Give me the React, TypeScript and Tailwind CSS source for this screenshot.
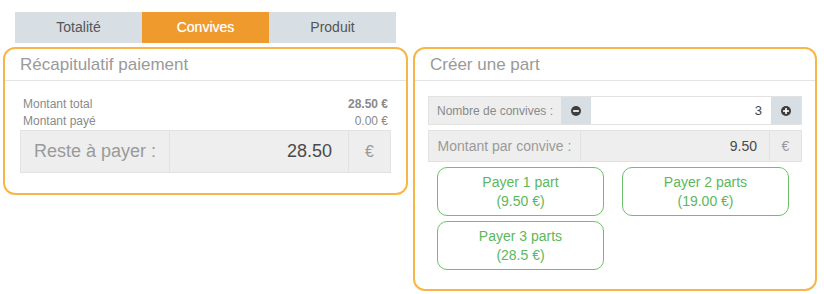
import React from 'react';

function CircleIcon({ plus }: { plus?: boolean }) {
  return (
    <svg width="10" height="10" viewBox="0 0 12 12">
      <circle cx="6" cy="6" r="6" fill="#3d3d3d" />
      <rect x="2.5" y="5" width="7" height="2" fill="#fff" />
      {plus && <rect x="5" y="2.5" width="2" height="7" fill="#fff" />}
    </svg>
  );
}

function PayButton({ label, amount }: { label: string; amount: string }) {
  return (
    <button className="w-[167px] h-[49px] rounded-[10px] border border-[#6cc26c] bg-white text-[#5cb85c] text-[14px] leading-[19px] flex flex-col items-center justify-center">
      <span>{label}</span>
      <span>{amount}</span>
    </button>
  );
}

export default function App() {
  const tabs = ['Totalité', 'Convives', 'Produit'];

  return (
    <div className="w-[824px] h-[294px] bg-white flex gap-[5px] pl-[3px] pt-[12px]" style={{ fontFamily: '"Liberation Sans", Arial, sans-serif' }}>
      {/* Left column */}
      <div className="w-[405px] flex flex-col">
        <div className="mx-[12px] h-[31px] flex">
          {tabs.map((t) => (
            <div
              key={t}
              className={
                t === 'Convives'
                  ? 'flex-1 flex items-center justify-center bg-[#ee9a2c] text-white text-[14px] [text-shadow:0_0_1px_rgba(255,255,255,0.6)]'
                  : 'flex-1 flex items-center justify-center bg-[#d7dee4] text-[#555] text-[14px]'
              }
            >
              {t}
            </div>
          ))}
        </div>

        <div className="mt-[4px] h-[148px] rounded-[12px] border-2 border-[#f8b649] flex flex-col">
          <div className="h-[32px] border-b border-[#e4e4e4] pl-[15px] flex items-center text-[17px] text-[#9a9a9a]">
            Récapitulatif paiement
          </div>
          <div className="px-[15px] pt-[15px]">
            <div className="px-[3px] flex justify-between text-[12px] leading-[17px] text-[#8a8a8a]">
              <span>Montant total</span>
              <span className="font-bold">28.50 €</span>
            </div>
            <div className="px-[3px] flex justify-between text-[12px] leading-[17px] text-[#8a8a8a]">
              <span>Montant payé</span>
              <span>0.00 €</span>
            </div>
            <div className="h-[43px] flex bg-[#eeeeee] border border-[#e2e2e2]">
              <div className="w-[149px] flex items-center justify-center text-[18px] text-[#9a9a9a] border-r border-[#e2e2e2]">
                Reste à payer :
              </div>
              <div className="flex-1 flex items-center justify-end pr-[16px] text-[18px] text-[#4a4a4a] border-r border-[#e2e2e2]">
                28.50
              </div>
              <div className="w-[41px] flex items-center justify-center text-[16px] text-[#999]">€</div>
            </div>
          </div>
        </div>
      </div>

      {/* Right panel */}
      <div className="mt-[35px] w-[404px] h-[244px] rounded-[12px] border-2 border-[#f8b649] flex flex-col">
        <div className="h-[32px] border-b border-[#e4e4e4] pl-[15px] flex items-center text-[17px] text-[#9a9a9a]">
          Créer une part
        </div>
        <div className="px-[13px] pt-[15px] flex flex-col">
          <div className="h-[29px] flex bg-[#eeeeee] border border-[#e2e2e2]">
            <div className="w-[132px] flex items-center justify-center text-[12px] text-[#8a8a8a]">
              Nombre de convives :
            </div>
            <div className="w-[30px] bg-[#d7dee4] flex items-center justify-center">
              <CircleIcon />
            </div>
            <div className="flex-1 bg-white flex items-center justify-end pr-[9px] text-[13px] text-[#444]">3</div>
            <div className="w-[30px] bg-[#d7dee4] flex items-center justify-center">
              <CircleIcon plus />
            </div>
          </div>
          <div className="mt-[5px] h-[32px] flex bg-[#eeeeee] border border-[#e2e2e2]">
            <div className="w-[152px] flex items-center justify-center text-[14px] text-[#9a9a9a] border-r border-[#e2e2e2]">
              Montant par convive :
            </div>
            <div className="flex-1 flex items-center justify-end pr-[12px] text-[14px] text-[#4a4a4a] border-r border-[#e2e2e2]">
              9.50
            </div>
            <div className="w-[31px] flex items-center justify-center text-[14px] text-[#999]">€</div>
          </div>
          <div className="mt-[5px] pl-[9px] grid grid-cols-[167px_167px] gap-x-[18px] gap-y-[5px]">
            <PayButton label="Payer 1 part" amount="(9.50 €)" />
            <PayButton label="Payer 2 parts" amount="(19.00 €)" />
            <PayButton label="Payer 3 parts" amount="(28.5 €)" />
          </div>
        </div>
      </div>
    </div>
  );
}
